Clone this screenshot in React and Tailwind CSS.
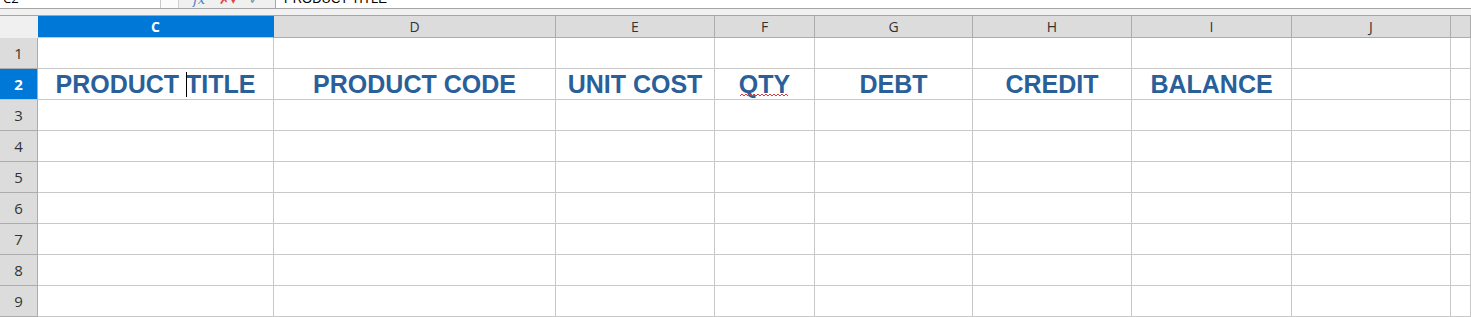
import React from "react";

const cols = ["C", "D", "E", "F", "G", "H", "I", "J", ""];
const gridCols =
  "grid grid-cols-[38px_236px_282px_159px_100px_158px_159px_160px_159px_1fr]";
const titles = ["PRODUCT TITLE", "PRODUCT CODE", "UNIT COST", "QTY", "DEBT", "CREDIT", "BALANCE", "", ""];

function Squiggle() {
  let d = "M0 3";
  for (let i = 0; i < 12; i++) {
    const x = i * 4;
    d += ` L${x + 2} 1 L${x + 4} 3`;
  }
  return (
    <svg className="absolute left-[25px] top-[24px]" width="50" height="5" viewBox="0 0 50 5">
      <path d={d} fill="none" stroke="#e0393b" strokeWidth="1" />
    </svg>
  );
}

export default function App() {
  const rows = [1, 2, 3, 4, 5, 6, 7, 8, 9];
  return (
    <div className="w-[1471px] h-[317px] overflow-hidden bg-white font-['Liberation_Sans',sans-serif]">
      {/* formula bar (cut off) */}
      <div className="flex h-[9px] overflow-hidden border-b border-[#a6a6a6] bg-[#f0f0f0]">
        <div className="w-[160px] bg-white relative">
          <span className="absolute left-[3px] top-[-11px] text-[13px] text-black font-['Open_Sans',sans-serif]">C2</span>
        </div>
        <div className="w-[18px] bg-[#fbfbfb] border-l border-[#c8c8c8]"></div>
        <div className="w-[97px] relative border-l border-[#d0d0d0]">
          <span className="absolute left-[14px] top-[-10px] text-[13px] italic text-[#3c7fc4] font-['DejaVu_Serif',serif]">fx</span>
          <span className="absolute left-[40px] top-[-10px] text-[13px] text-[#e04040]">✗▾</span>
          <span className="absolute left-[70px] top-[-10px] text-[13px] text-[#888]">✓</span>
        </div>
        <div className="flex-1 bg-white relative border-l border-[#a6a6a6]">
          <span className="absolute left-[8px] top-[-11px] text-[13px] text-black">PRODUCT TITLE</span>
        </div>
      </div>
      <div className="h-[6px] bg-[#f0f0f0]"></div>
      {/* column headers */}
      <div className={`${gridCols} h-[23px] border-t border-[#a6a6a6] bg-[#f0f0f0]`}>
        <div className="bg-[#f0f0f0] border-b border-[#f0f0f0]"></div>
        {cols.map((c, i) => (
          <div
            key={i}
            className={`flex items-center justify-center border-r border-b text-[14px] font-['Open_Sans',sans-serif] ${
              c === "C"
                ? "bg-[#0078d7] text-white font-bold border-[#0078d7] border-b-[#c8c8c8]"
                : "bg-[#dcdcdc] text-[#333] border-[#acacac]"
            }`}
          >
            {c}
          </div>
        ))}
      </div>
      {/* rows */}
      {rows.map((r) => (
        <div key={r} className={`${gridCols} h-[31px]`}>
          <div
            className={`flex items-center justify-center border-r border-b text-[15px] font-['Open_Sans',sans-serif] ${
              r === 2
                ? "bg-[#0078d7] text-white font-bold border-r-[#acacac] border-b-[#c8c8c8]"
                : "bg-[#dcdcdc] text-[#333] border-[#acacac]"
            }`}
          >
            {r}
          </div>
          {cols.map((c, i) => (
            <div
              key={i}
              className="relative flex items-center justify-center border-r border-b border-[#c8c8c8] whitespace-nowrap"
            >
              {r === 2 && titles[i] && (
                <span className="text-[25px] font-bold leading-none text-[#2a6099]">{titles[i]}</span>
              )}
              {r === 2 && i === 0 && (
                <div className="absolute left-[148px] top-[3px] h-[25px] w-px bg-black"></div>
              )}
              {r === 2 && i === 3 && <Squiggle />}
            </div>
          ))}
        </div>
      ))}
    </div>
  );
}
